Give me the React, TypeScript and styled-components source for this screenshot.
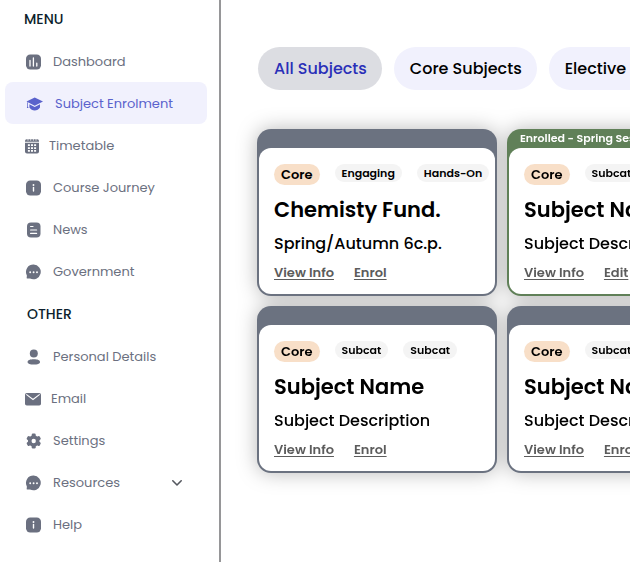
import React from "react";
import styled, { createGlobalStyle, css } from "styled-components";

const GlobalStyle = createGlobalStyle`
  *, *::before, *::after { box-sizing: border-box; }
  body {
    margin: 0;
    background: #fff;
    color: #000;
    font-family: Poppins, Inter, "Liberation Sans", sans-serif;
  }
  h2, h3, p, ul { margin: 0; padding: 0; }
  ul { list-style: none; }
`;

const Page = styled.div`
  display: flex;
  min-height: 100vh;
`;

/* ---------- Sidebar ---------- */

const Sidebar = styled.nav`
  flex: 0 0 221px;
  border-right: 2px solid #969698;
`;

const Group = styled.section`
  & + & { margin-top: 3px; }
`;

const GroupTitle = styled.h2<{ $indent: number }>`
  padding: 9px 0 11px ${(p) => p.$indent}px;
  font-size: 14px;
  line-height: 20px;
  font-weight: 500;
  color: #0d1f2d;
`;

const NavLink = styled.a<{ $active?: boolean; $tight?: boolean }>`
  display: flex;
  align-items: center;
  gap: ${(p) => (p.$tight ? 10 : 12)}px;
  height: 42px;
  margin: 0 12px 0 5px;
  padding: 2px 24px 0 20px;
  border-radius: 8px;
  font-size: 13px;
  line-height: 20px;
  text-decoration: none;
  color: ${(p) => (p.$active ? "#5a62cc" : "#6b7080")};
  background: ${(p) => (p.$active ? "#f1f1fd" : "transparent")};

  svg { flex: none; }
  svg:last-child { margin-left: auto; }
`;

/* ---------- Icons ---------- */

const DashboardIcon = () => (
  <svg width="16" height="16" viewBox="0 0 16 16" fill="none" aria-hidden="true">
    <rect x="1" y="0.5" width="15" height="15" rx="4.2" fill="#6b7080" />
    <path d="M5 6.5v5.5M8.4 4v8M11.8 9.2V12" stroke="#fff" strokeWidth="1.3" strokeLinecap="round" />
  </svg>
);

const HatIcon = () => (
  <svg width="18" height="16" viewBox="0 0 18 16" aria-hidden="true">
    <path d="M9.7 1.6 18 5.6 9.7 9.8 1.5 5.6Z" fill="#5a62cc" />
    <path d="M4.4 8.3 9.7 11l5.3-2.7v3.3c-1.3 1.9-3.1 2.9-5.3 2.9s-4-1-5.3-2.9Z" fill="#5a62cc" />
    <path d="M2.3 6v4.6L1.8 12h1.7L3 10.6V6.4Z" fill="#5a62cc" />
  </svg>
);

const CalendarIcon = () => (
  <svg width="14" height="16" viewBox="0 0 14 16" aria-hidden="true">
    <path d="M0 4.8h14v8.7a2 2 0 0 1-2 2H2a2 2 0 0 1-2-2Z" fill="#6b7080" />
    <path d="M0 3.8V3a1.7 1.7 0 0 1 1.7-1.7h10.6A1.7 1.7 0 0 1 14 3v.8Z" fill="#6b7080" />
    <path d="M3 .8v2M5.7.8v2M8.4.8v2M11 .8v2" stroke="#fff" strokeWidth=".7" />
    <path
      d="M2.9 6.3h2v1.8h-2Zm3.1 0h2v1.8H6Zm3.1 0h2v1.8h-2ZM2.9 9.2h2V11h-2Zm3.1 0h2V11H6Zm3.1 0h2V11h-2ZM2.9 12.1h2v1.6h-2Zm3.1 0h2v1.6H6Zm3.1 0h2v1.6h-2Z"
      fill="#fff"
    />
  </svg>
);

const InfoIcon = () => (
  <svg width="16" height="16" viewBox="0 0 16 16" aria-hidden="true">
    <rect x="1" y="0.5" width="15" height="15" rx="4.2" fill="#6b7080" />
    <circle cx="8.5" cy="5" r=".95" fill="#fff" />
    <path d="M8.5 7.4v3.7" stroke="#fff" strokeWidth="1.4" strokeLinecap="round" />
  </svg>
);

const NewsIcon = () => (
  <svg width="16" height="16" viewBox="0 0 16 16" fill="none" aria-hidden="true">
    <rect x="2" y="0.5" width="13.5" height="15" rx="4" fill="#6b7080" />
    <path d="M5.6 4.5h2.4M5.6 8h6M5.6 11.4h6" stroke="#fff" strokeWidth="1.2" strokeLinecap="round" />
  </svg>
);

const ChatIcon = () => (
  <svg width="16" height="16" viewBox="0 0 16 16" aria-hidden="true">
    <path
      d="M8.6.5A7.4 7.4 0 1 1 5 14.5c-1-.4-2 .4-3 0-.8-.3.1-1.9-.2-3.2A7.4 7.4 0 0 1 8.600.5Z"
      fill="#6b7080"
    />
    <circle cx="5.2" cy="8.2" r=".95" fill="#fff" />
    <circle cx="8.6" cy="8.2" r=".95" fill="#fff" />
    <circle cx="12" cy="8.2" r=".95" fill="#fff" />
  </svg>
);

const PersonIcon = () => (
  <svg width="16" height="16" viewBox="0 0 16 16" fill="#6b7080" aria-hidden="true">
    <circle cx="8.8" cy="4.5" r="4" />
    <path d="M8.8 10.3c3.700 0 6.200.8 6.200 2.600s-2.500 2.600-6.200 2.600-6.200-.8-6.200-2.600 2.500-2.600 6.200-2.600Z" />
  </svg>
);

const MailIcon = () => (
  <svg width="16" height="16" viewBox="0 0 16 16" aria-hidden="true">
    <rect x="0" y="2" width="16" height="12.5" rx="1.8" fill="#6b7080" />
    <path d="m1.300 3.400 6.700 5.100 6.700-5.100" fill="none" stroke="#fff" strokeWidth="1.1" />
  </svg>
);

const GearIcon = () => (
  <svg width="16" height="16" viewBox="0 0 16 16" aria-hidden="true">
    <g fill="#6b7080">
      <circle cx="8.7" cy="8" r="5.8" />
      <rect x="6.7" y=".6" width="4" height="14.8" rx="1.2" />
      <rect x="6.7" y=".6" width="4" height="14.8" rx="1.2" transform="rotate(60 8.7 8)" />
      <rect x="6.7" y=".6" width="4" height="14.8" rx="1.2" transform="rotate(120 8.7 8)" />
    </g>
    <circle cx="8.7" cy="8" r="2.2" fill="#fff" />
  </svg>
);

const ChevronIcon = () => (
  <svg width="12" height="12" viewBox="0 0 12 12" fill="none" aria-hidden="true">
    <path d="m1.800 3.800 4.200 4.200 4.200-4.200" stroke="#55585f" strokeWidth="1.6" strokeLinecap="round" strokeLinejoin="round" />
  </svg>
);

/* ---------- Main column ---------- */

const Main = styled.main`
  flex: 1;
  min-width: 0;
  padding: 47px 0 0 36px;
  overflow: hidden;
`;

const Filters = styled.div`
  display: flex;
  gap: 12px;
  padding-left: 1px;
`;

const FilterButton = styled.button<{ $active?: boolean }>`
  flex: none;
  padding: 0 15px 0 16px;
  border: 0;
  border-radius: 22px;
  font-family: inherit;
  font-size: 16px;
  line-height: 43px;
  font-weight: 500;
  cursor: pointer;
  color: ${(p) => (p.$active ? "#2a2fb8" : "#000")};
  background: ${(p) => (p.$active ? "#dcdde2" : "#f1f1fd")};
`;

const CardGrid = styled.div`
  display: grid;
  grid-template-columns: repeat(2, 240px);
  gap: 10px;
  margin-top: 39px;
  filter: drop-shadow(0 0 10px rgba(0, 0, 0, 0.28));
`;

const Card = styled.article<{ $enrolled?: boolean }>`
  display: flex;
  flex-direction: column;
  padding: 0 2px 2px;
  border-radius: 14px;
  background: ${(p) => (p.$enrolled ? "#608058" : "#6b7280")};
`;

const CardBanner = styled.p`
  height: 19px;
  padding-left: 11px;
  overflow: hidden;
  white-space: nowrap;
  font-size: 11px;
  line-height: 19px;
  font-weight: 600;
  color: #fff;
`;

const CardBody = styled.div`
  padding: 16px 5px 11px 15px;
  border-radius: 12px;
  background: #fff;
`;

const Tags = styled.div`
  display: flex;
  align-items: flex-start;
  gap: 15px;
`;

const Tag = styled.span<{ $core?: boolean }>`
  flex: none;
  padding: 0 7px;
  border-radius: 11px;
  font-size: 11px;
  line-height: 18px;
  font-weight: 600;
  background: #f4f4f4;
  ${(p) =>
    p.$core &&
    css`
      font-size: 13px;
      line-height: 21px;
      background: #f8dfc8;
    `}
`;

const CardTitle = styled.h3`
  margin-top: 10px;
  font-size: 21px;
  line-height: 30px;
  font-weight: 600;
  white-space: nowrap;
`;

const CardText = styled.p`
  margin-top: 7px;
  font-size: 16px;
  line-height: 24px;
  font-weight: 500;
  white-space: nowrap;
`;

const Actions = styled.div`
  display: flex;
  gap: 20px;
  margin-top: 7px;
`;

const ActionLink = styled.a`
  font-size: 13px;
  line-height: 20px;
  font-weight: 600;
  color: #5c5c5c;
  text-decoration: underline;
  text-underline-offset: 2px;
`;

/* ---------- Data ---------- */

type NavEntry = { label: string; Icon: React.FC; active?: boolean; tight?: boolean; expandable?: boolean };

const menu: NavEntry[] = [
  { label: "Dashboard", Icon: DashboardIcon },
  { label: "Subject Enrolment", Icon: HatIcon, active: true },
  { label: "Timetable", Icon: CalendarIcon, tight: true },
  { label: "Course Journey", Icon: InfoIcon },
  { label: "News", Icon: NewsIcon },
  { label: "Government", Icon: ChatIcon },
];

const other: NavEntry[] = [
  { label: "Personal Details", Icon: PersonIcon },
  { label: "Email", Icon: MailIcon, tight: true },
  { label: "Settings", Icon: GearIcon },
  { label: "Resources", Icon: ChatIcon, expandable: true },
  { label: "Help", Icon: InfoIcon },
];

type Subject = { title: string; text: string; tags: string[]; action: string; banner?: string };

const subjects: Subject[] = [
  { title: "Chemisty Fund.", text: "Spring/Autumn 6c.p.", tags: ["Engaging", "Hands-On"], action: "Enrol" },
  { title: "Subject Name", text: "Subject Description", tags: ["Subcat"], action: "Edit", banner: "Enrolled - Spring Session" },
  { title: "Subject Name", text: "Subject Description", tags: ["Subcat", "Subcat"], action: "Enrol" },
  { title: "Subject Name", text: "Subject Description", tags: ["Subcat"], action: "Enrol" },
];

const NavGroup = ({ title, indent, entries }: { title: string; indent: number; entries: NavEntry[] }) => (
  <Group>
    <GroupTitle $indent={indent}>{title}</GroupTitle>
    <ul>
      {entries.map(({ label, Icon, active, tight, expandable }) => (
        <li key={label}>
          <NavLink href="#" $active={active} $tight={tight} aria-current={active ? "page" : undefined}>
            <Icon />
            <span>{label}</span>
            {expandable && <ChevronIcon />}
          </NavLink>
        </li>
      ))}
    </ul>
  </Group>
);

export default function App() {
  return (
    <>
      <GlobalStyle />
      <Page>
        <Sidebar aria-label="Main">
          <NavGroup title="MENU" indent={24} entries={menu} />
          <NavGroup title="OTHER" indent={27} entries={other} />
        </Sidebar>
        <Main>
          <Filters>
            <FilterButton $active aria-pressed="true">All Subjects</FilterButton>
            <FilterButton>Core Subjects</FilterButton>
            <FilterButton>Elective Subjects</FilterButton>
          </Filters>
          <CardGrid>
            {subjects.map((s, i) => (
              <Card key={i} $enrolled={!!s.banner}>
                <CardBanner>{s.banner}</CardBanner>
                <CardBody>
                  <Tags>
                    <Tag $core>Core</Tag>
                    {s.tags.map((t, j) => (
                      <Tag key={j}>{t}</Tag>
                    ))}
                  </Tags>
                  <CardTitle>{s.title}</CardTitle>
                  <CardText>{s.text}</CardText>
                  <Actions>
                    <ActionLink href="#">View Info</ActionLink>
                    <ActionLink href="#">{s.action}</ActionLink>
                  </Actions>
                </CardBody>
              </Card>
            ))}
          </CardGrid>
        </Main>
      </Page>
    </>
  );
}
